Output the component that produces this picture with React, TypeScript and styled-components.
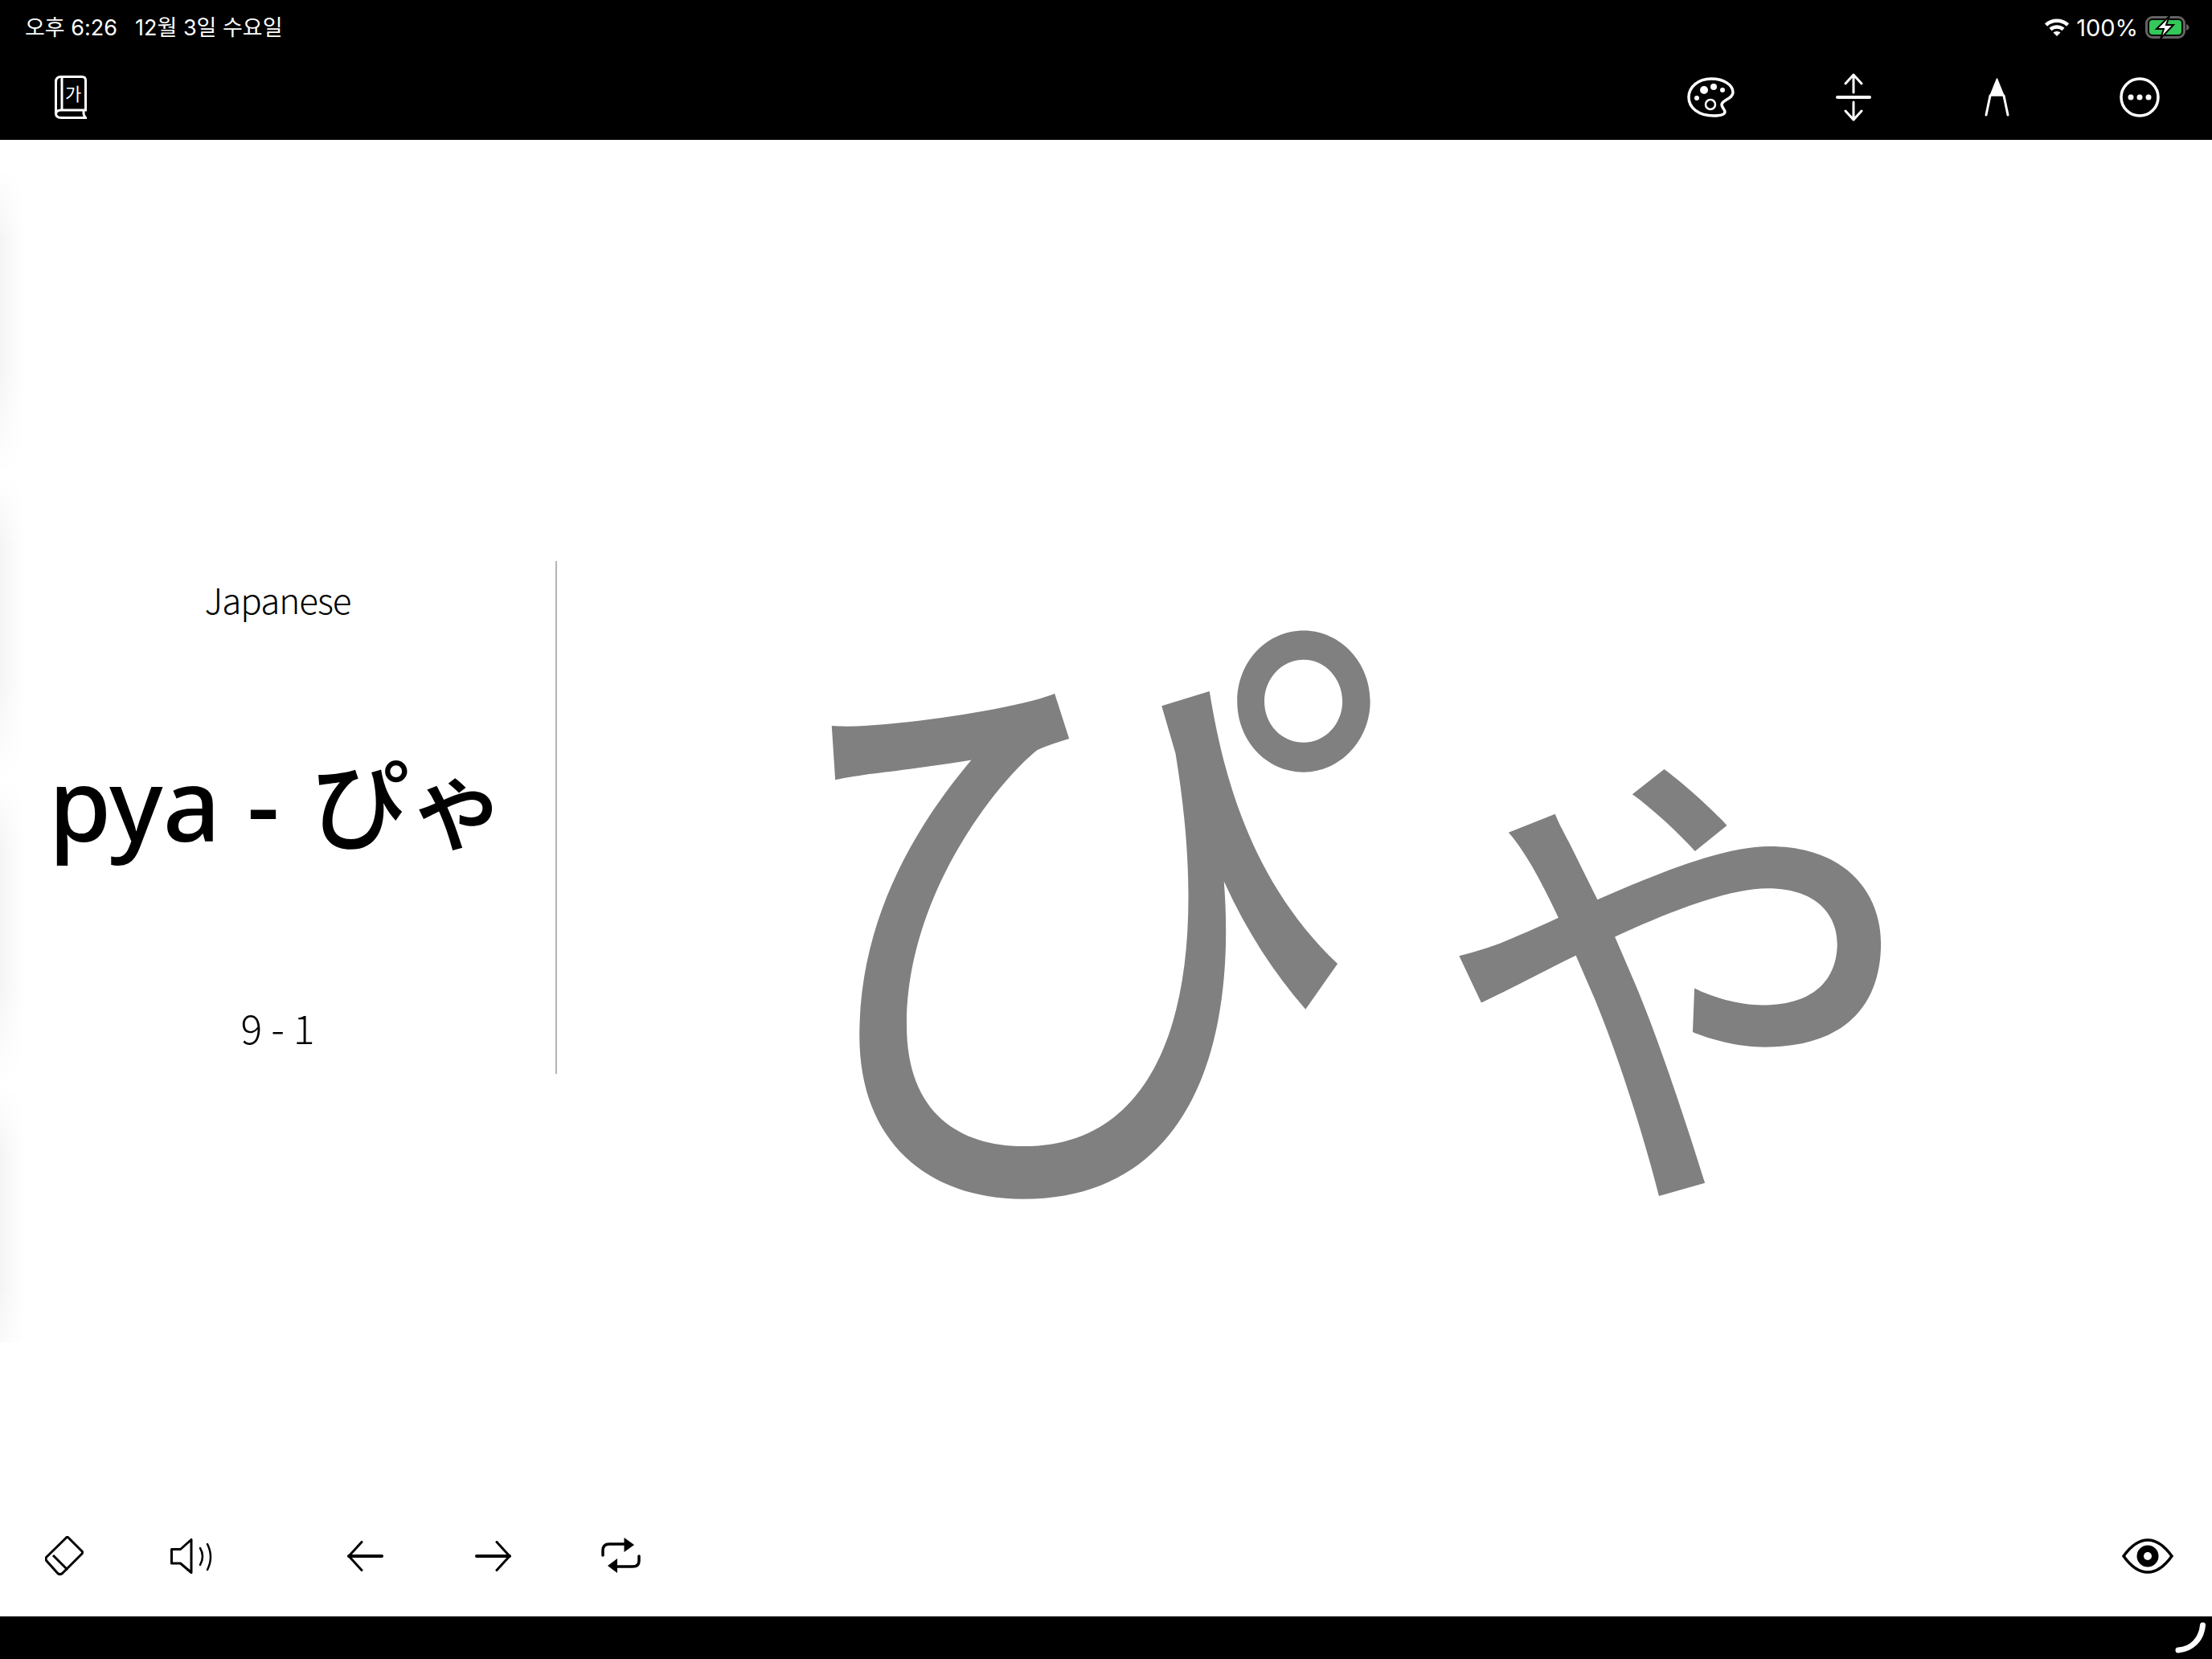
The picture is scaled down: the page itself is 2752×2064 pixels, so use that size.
import React from "react";
import styled, { createGlobalStyle } from "styled-components";

const GlobalStyle = createGlobalStyle`
  html, body {
    margin: 0;
    padding: 0;
    background: #fff;
  }
  * {
    box-sizing: border-box;
  }
`;

const sansStack = `Inter, "Noto Sans CJK KR", sans-serif`;
const labelStack = `"Noto Sans CJK KR", sans-serif`;
const titleStack = `"Noto Sans", "Noto Sans CJK JP", sans-serif`;

const Screen = styled.div`
  position: relative;
  width: 2752px;
  height: 2064px;
  display: flex;
  flex-direction: column;
  overflow: hidden;
  background: #fff;
`;

const TopBar = styled.header`
  height: 174px;
  background: #000;
  color: #fff;
  display: flex;
  flex-direction: column;
`;

const StatusRow = styled.div`
  height: 68px;
  padding: 0 28px 0 31px;
  display: flex;
  align-items: center;
  justify-content: space-between;
  font-family: ${sansStack};
  font-size: 27px;
  line-height: 1;
`;

const StatusGroup = styled.div<{ $gap: number }>`
  display: flex;
  align-items: center;
  gap: ${(props) => props.$gap}px;
`;

const BatteryText = styled.span`
  font-size: 29px;
`;

const Toolbar = styled.div`
  flex: 1;
  padding: 0 60px 0 58px;
  display: flex;
  align-items: center;
  justify-content: space-between;
`;

const ToolGroup = styled.div<{ $gap: number }>`
  display: flex;
  align-items: center;
  gap: ${(props) => props.$gap}px;
`;

const ToolSlot = styled.div`
  width: 60px;
  height: 60px;
  display: flex;
  align-items: center;
  justify-content: center;
  svg {
    flex-shrink: 0;
  }
`;

const Stage = styled.main`
  height: 1686px;
  display: flex;
  align-items: center;
`;

const InfoPanel = styled.section`
  width: 693px;
  height: 638px;
  border-right: 2px solid #b4b4b4;
  display: flex;
  flex-direction: column;
  align-items: center;
  justify-content: space-between;
  color: #000;
  padding: 18px 0 30px;
`;

const PanelLabel = styled.div<{ $size: number; $tracking: number }>`
  font-family: ${labelStack};
  font-size: ${(props) => props.$size}px;
  letter-spacing: ${(props) => props.$tracking}px;
  font-weight: 300;
  line-height: 58px;
`;

const PanelTitle = styled.div`
  font-family: ${titleStack};
  font-size: 126px;
  font-weight: 550;
  line-height: 1.2;
  margin-bottom: 24px;
  white-space: nowrap;
`;

const TitleKana = styled.span`
  font-size: 122px;
  font-weight: 500;
  margin-left: 6px;
`;

const CharacterArea = styled.div`
  flex: 1;
  height: 100%;
  display: flex;
  align-items: center;
  justify-content: center;
  padding-top: 145px;
`;

const BigKana = styled.div`
  font-family: "Noto Sans CJK JP", sans-serif;
  line-height: 1;
  color: #808080;
  white-space: nowrap;
  display: flex;
  align-items: baseline;
`;

const KanaGlyph = styled.span<{ $size: number; $stretch: number; $shift: number; $lift: number }>`
  display: inline-block;
  font-size: ${(props) => props.$size}px;
  margin-left: ${(props) => props.$shift}px;
  transform: translateY(${(props) => -props.$lift}px) scaleX(${(props) => props.$stretch});
  transform-origin: left center;
`;

const BottomTools = styled.div`
  flex: 1;
  padding: 0 50px;
  display: flex;
  align-items: center;
  justify-content: space-between;
`;

const BottomBar = styled.footer`
  height: 53px;
  background: #000;
  display: flex;
  align-items: center;
  justify-content: flex-end;
  padding-right: 8px;
`;

const EdgeShadow = styled.div`
  position: absolute;
  left: 0;
  top: 210px;
  width: 34px;
  height: 1460px;
  background: linear-gradient(to right, #f4f4f4, #fdfdfd 70%, #fff);
  mask-image: repeating-linear-gradient(to bottom, transparent 0, #000 90px, #000 250px, transparent 380px);
`;

const BookIcon = () => (
  <svg width="40" height="54" viewBox="0 0 40 54" fill="none" stroke="#fff" strokeWidth="3">
    <path d="M8 1.5H34Q38.5 1.5 38.5 6V43H8Q1.5 43 1.5 48V8Q1.5 1.5 8 1.5Z" />
    <path d="M1.5 46V47Q1.5 52.5 8 52.5H38.5Q36 50 36 47V43" />
    <path d="M9 2V43" />
    <text x="13" y="31" fontSize="22" fontFamily="'Noto Sans CJK KR'" fill="#fff" stroke="none">
      가
    </text>
  </svg>
);

const PaletteIcon = () => (
  <svg width="59" height="50" viewBox="0 0 59 50" fill="none" stroke="#fff" strokeWidth="3.5">
    <path d="M30 2C46 2 57 10 57 19C57 27 44 28 43 34C43 38 47 40 47 43C47 47 41 48 33 48C14 48 2 38 2 25C2 12 14 2 30 2Z" />
    <ellipse cx="29" cy="34" rx="6" ry="6" strokeWidth="2.5" />
    <g fill="#fff" stroke="none">
      <circle cx="12" cy="26" r="3" />
      <circle cx="21" cy="16" r="5" />
      <circle cx="33" cy="12" r="4" />
      <circle cx="44" cy="16" r="3" />
    </g>
  </svg>
);

const SplitIcon = () => (
  <svg width="44" height="60" viewBox="0 0 44 60" fill="none" stroke="#fff" strokeWidth="3" strokeLinecap="round" strokeLinejoin="round">
    <path d="M2 30H42" strokeWidth="4" />
    <path d="M22 24V2M12 13L22 2L32 13" />
    <path d="M22 36V58M12 47L22 58L32 47" />
  </svg>
);

const PenIcon = () => (
  <svg width="31" height="48" viewBox="0 0 31 48" fill="none" stroke="#fff" strokeWidth="3" strokeLinecap="round" strokeLinejoin="round">
    <path d="M15.5 1L24 22H7Z" fill="#fff" strokeWidth="1.5" />
    <path d="M7 22L2 46M24 22L29 46" />
  </svg>
);

const MoreIcon = () => (
  <svg width="50" height="52" viewBox="0 0 50 52" fill="none" stroke="#fff" strokeWidth="3.5">
    <circle cx="25" cy="26" r="23" />
    <g fill="#fff" stroke="none">
      <circle cx="14" cy="26" r="3.5" />
      <circle cx="25" cy="26" r="3.5" />
      <circle cx="36" cy="26" r="3.5" />
    </g>
  </svg>
);

const WifiIcon = () => (
  <svg width="30" height="22" viewBox="0 0 30 22" fill="none" stroke="#fff" strokeWidth="4.5">
    <path d="M1.5 8C9 1 21 1 28.5 8" />
    <path d="M7 13.5C11.5 9.5 18.5 9.5 23 13.5" />
    <path d="M15 22L10.5 17.5C13 15.5 17 15.5 19.5 17.5Z" fill="#fff" stroke="none" />
  </svg>
);

const BatteryIcon = () => (
  <svg width="55" height="28" viewBox="0 0 55 28">
    <rect x="1.5" y="1.5" width="47" height="25" rx="7.5" fill="none" stroke="#636363" strokeWidth="3" />
    <rect x="5" y="5" width="40" height="18" rx="4" fill="#34c759" />
    <path d="M51 10Q54.5 11.5 54.5 14Q54.5 16.5 51 18Z" fill="#636363" />
    <path d="M30 0L14 16H23L19 28L35 11H26Z" fill="#fff" stroke="#000" strokeWidth="2" />
  </svg>
);

const EraserIcon = () => (
  <svg width="48" height="49" viewBox="0 0 48 49" fill="none" stroke="#000" strokeWidth="3" strokeLinejoin="round">
    <path d="M28.5 1.5L46.5 19.5Q47 20.5 46 22L21.5 46.5Q18 49 15.5 46L2 31Q0 28 2 26L26.5 2Q27.5 1 28.5 1.5Z" />
    <path d="M10 24L28 42" />
  </svg>
);

const SpeakerIcon = () => (
  <svg width="53" height="44" viewBox="0 0 53 44" fill="none" stroke="#000" strokeWidth="3" strokeLinejoin="round" strokeLinecap="round">
    <path d="M1.5 13.5H12.5L26 1.5V42.5L12.5 31H1.5Z" />
    <path d="M37 12Q43 22 37 33" strokeWidth="2.5" />
    <path d="M46 7Q54 23 46 39" strokeWidth="2.5" />
  </svg>
);

const ArrowIcon = ({ flip = false }: { flip?: boolean }) => (
  <svg width="45" height="38" viewBox="0 0 45 38" fill="none" stroke="#000" strokeLinecap="round" strokeLinejoin="round" transform={flip ? "scale(-1 1)" : undefined}>
    <path d="M2 19H43" strokeWidth="4" />
    <path d="M18 1.5L2 19L18 36.5" strokeWidth="3" />
  </svg>
);

const RepeatIcon = () => (
  <svg width="49" height="45" viewBox="0 0 49 45" fill="none" stroke="#000" strokeWidth="3.5" strokeLinecap="round">
    <path d="M2 22V16Q2 8 10 8H30" />
    <path d="M47 23V29Q47 36 39 36H19" />
    <path d="M28.5 0L41 9L28.5 18Z" fill="#000" stroke="none" />
    <path d="M20 26L8 35L20 44Z" fill="#000" stroke="none" />
  </svg>
);

const EyeIcon = () => (
  <svg width="64" height="44" viewBox="0 0 64 44" fill="none" stroke="#000" strokeWidth="3.5">
    <path d="M2 22C12 8 22 2 32 2C42 2 52 8 62 22C52 36 42 42 32 42C22 42 12 36 2 22Z" />
    <circle cx="32" cy="22" r="13.5" fill="#000" stroke="none" />
    <circle cx="32" cy="22" r="5" fill="#fff" stroke="none" />
  </svg>
);

const HomeCorner = () => (
  <svg width="38" height="39" viewBox="0 0 38 39" fill="none" stroke="#fff" strokeWidth="7" strokeLinecap="round">
    <path d="M4 35C20 34 33 22 34.5 4" />
  </svg>
);

const App = () => {
  return (
    <Screen>
      <GlobalStyle />
      <TopBar>
        <StatusRow>
          <StatusGroup $gap={22}>
            <span>오후 6:26</span>
            <span>12월 3일 수요일</span>
          </StatusGroup>
          <StatusGroup $gap={9}>
            <WifiIcon />
            <BatteryText>100%</BatteryText>
            <BatteryIcon />
          </StatusGroup>
        </StatusRow>
        <Toolbar>
          <ToolSlot>
            <BookIcon />
          </ToolSlot>
          <ToolGroup $gap={118}>
            <ToolSlot>
              <PaletteIcon />
            </ToolSlot>
            <ToolSlot>
              <SplitIcon />
            </ToolSlot>
            <ToolSlot>
              <PenIcon />
            </ToolSlot>
            <ToolSlot>
              <MoreIcon />
            </ToolSlot>
          </ToolGroup>
        </Toolbar>
      </TopBar>
      <Stage>
        <InfoPanel>
          <PanelLabel $size={44} $tracking={-1}>Japanese</PanelLabel>
          <PanelTitle>
            pya - <TitleKana>ぴゃ</TitleKana>
          </PanelTitle>
          <PanelLabel $size={50} $tracking={0}>9 - 1</PanelLabel>
        </InfoPanel>
        <CharacterArea>
          <BigKana>
            <KanaGlyph $size={800} $stretch={0.94} $shift={0} $lift={0}>ぴ</KanaGlyph>
            <KanaGlyph $size={745} $stretch={0.97} $shift={-34} $lift={9}>ゃ</KanaGlyph>
          </BigKana>
        </CharacterArea>
      </Stage>
      <BottomTools>
        <ToolGroup $gap={156}>
          <ToolGroup $gap={98}>
            <ToolSlot>
              <EraserIcon />
            </ToolSlot>
            <ToolSlot>
              <SpeakerIcon />
            </ToolSlot>
          </ToolGroup>
          <ToolGroup $gap={99}>
            <ToolSlot>
              <ArrowIcon />
            </ToolSlot>
            <ToolSlot>
              <ArrowIcon flip />
            </ToolSlot>
            <ToolSlot>
              <RepeatIcon />
            </ToolSlot>
          </ToolGroup>
        </ToolGroup>
        <ToolSlot>
          <EyeIcon />
        </ToolSlot>
      </BottomTools>
      <BottomBar>
        <HomeCorner />
      </BottomBar>
      <EdgeShadow />
    </Screen>
  );
};

export default App;
